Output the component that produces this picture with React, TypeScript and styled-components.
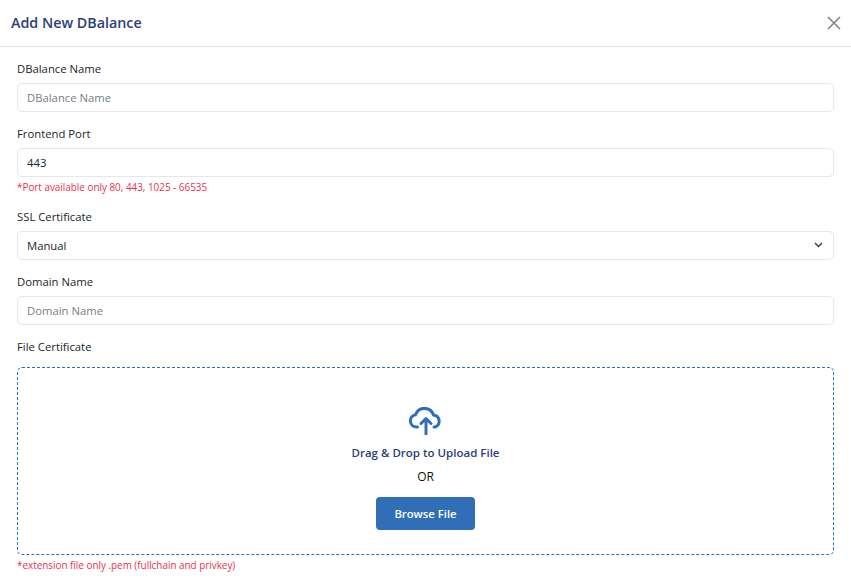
import React from "react";
import styled, { createGlobalStyle } from "styled-components";

const Global = createGlobalStyle`
  html, body { margin: 0; padding: 0; background: #fff; }
  body { font-family: "Open Sans", "Noto Sans", "Liberation Sans", sans-serif; font-size: 12px; color: #212529; }
  * { box-sizing: border-box; }
`;

const Modal = styled.div`
  width: 851px;
  height: 579px;
  overflow: hidden;
  background: #fff;
`;

const Header = styled.header`
  height: 47px;
  padding: 0 9px 0 11px;
  display: flex;
  align-items: center;
  justify-content: space-between;
  border-bottom: 1px solid #dee2e6;
`;

const Title = styled.h1`
  margin: 0;
  font-size: 14.3px;
  font-weight: 600;
  line-height: 20px;
  color: #2c3e7a;
`;

const CloseButton = styled.button`
  width: 16px;
  height: 16px;
  padding: 0;
  border: 0;
  background: none;
  display: flex;
  color: #808080;
`;

const Body = styled.div`
  padding: 13px 17px 0;
  display: flex;
  flex-direction: column;
`;

const Group = styled.div<{ $gap?: number }>`
  display: flex;
  flex-direction: column;
  margin-bottom: ${(p) => p.$gap ?? 13}px;
`;

const Label = styled.label<{ $gap?: number }>`
  font-size: 11.3px;
  line-height: 18px;
  height: 18px;
  margin-bottom: ${(p) => p.$gap ?? 5}px;
  color: #212529;
`;

const Input = styled.input`
  height: 29px;
  width: 100%;
  padding: 0 9px;
  border: 1px solid #e4e6ef;
  border-radius: 5px;
  background: #fff;
  font: inherit;
  font-size: 11.3px;
  color: #212529;
  outline: none;
  &::placeholder { color: #777d85; opacity: 1; }
`;

const SelectWrap = styled.div`
  position: relative;
  display: flex;
`;

const Select = styled.select`
  appearance: none;
  height: 29px;
  width: 100%;
  padding: 0 9px;
  border: 1px solid #e4e6ef;
  border-radius: 5px;
  background: #fff;
  font: inherit;
  font-size: 11.3px;
  color: #212529;
  outline: none;
`;

const Chevron = styled.svg`
  position: absolute;
  top: 11px;
  right: 11px;
  pointer-events: none;
`;

const Help = styled.small`
  font-size: 9.9px;
  line-height: 14px;
  margin-top: 3px;
  color: #e8304f;
`;

const Drop = styled.div`
  height: 188px;
  border: 1px dashed #2273c9;
  border-radius: 5px;
  display: flex;
  flex-direction: column;
  align-items: center;
  padding-top: 39px;
`;

const DropTitle = styled.div`
  margin-top: 10px;
  font-size: 11.5px;
  font-weight: 600;
  line-height: 16px;
  color: #2c3e7a;
`;

const Or = styled.div`
  margin-top: 8px;
  font-size: 12px;
  font-weight: 500;
  line-height: 16px;
  color: #111;
`;

const Browse = styled.button`
  margin-top: 12px;
  width: 99px;
  height: 33px;
  border: 0;
  border-radius: 4px;
  background: #306fb7;
  color: #fff;
  font: inherit;
  font-size: 11.3px;
  font-weight: 600;
`;

export default function App() {
  return (
    <Modal>
      <Global />
      <Header>
        <Title>Add New DBalance</Title>
        <CloseButton aria-label="Close">
          <svg width="16" height="16" viewBox="0 0 16 16" fill="none" stroke="currentColor" strokeWidth="1.5">
            <path d="M2 2l12 12M14 2L2 14" />
          </svg>
        </CloseButton>
      </Header>
      <Body>
        <Group>
          <Label>DBalance Name</Label>
          <Input placeholder="DBalance Name" />
        </Group>
        <Group $gap={14}>
          <Label>Frontend Port</Label>
          <Input defaultValue="443" />
          <Help>*Port available only 80, 443, 1025 - 66535</Help>
        </Group>
        <Group>
          <Label>SSL Certificate</Label>
          <SelectWrap>
            <Select defaultValue="Manual">
              <option>Manual</option>
            </Select>
            <Chevron width="9" height="6" viewBox="0 0 9 6" fill="none" stroke="#343a40" strokeWidth="1.4">
              <path d="M1 1l3.5 3.5L8 1" />
            </Chevron>
          </SelectWrap>
        </Group>
        <Group>
          <Label>Domain Name</Label>
          <Input placeholder="Domain Name" />
        </Group>
        <Group $gap={0}>
          <Label $gap={11}>File Certificate</Label>
          <Drop>
            <svg width="34" height="28" viewBox="0 0 34 28" fill="none" stroke="#306fb7" strokeWidth="3" strokeLinecap="round" strokeLinejoin="round">
              <path d="M8.5 20H7.5A6.2 6.2 0 0 1 6.5 7.7A9.5 9.5 0 0 1 24.5 8A6.2 6.2 0 0 1 26 20H25" />
              <path d="M17 27V12M12 16.5l5-5 5 5" />
            </svg>
            <DropTitle>Drag &amp; Drop to Upload File</DropTitle>
            <Or>OR</Or>
            <Browse>Browse File</Browse>
          </Drop>
          <Help>*extension file only .pem (fullchain and privkey)</Help>
        </Group>
      </Body>
    </Modal>
  );
}
